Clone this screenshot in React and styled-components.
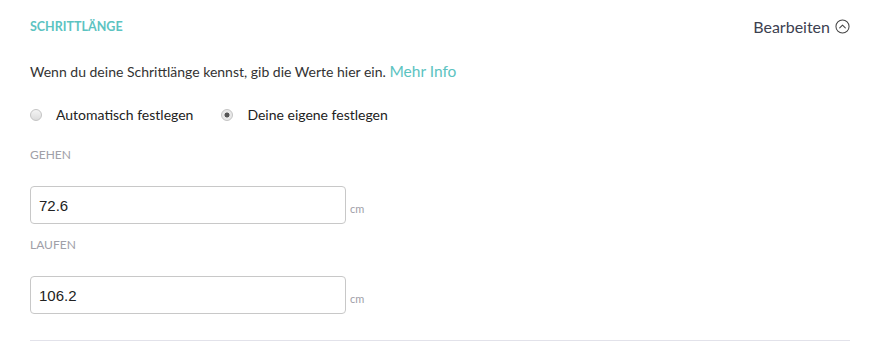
import React, { useState } from 'react';
import styled, { createGlobalStyle } from 'styled-components';

const GlobalStyle = createGlobalStyle`
  html, body { margin: 0; padding: 0; background: #fff; }
  body { font-family: Lato, "Open Sans", sans-serif; color: #333; }
`;

// --- ICONS ---
const ChevronCircle = () => (
  <svg width="15" height="15" viewBox="0 0 16 16" fill="none">
    <circle cx="8" cy="8" r="7" stroke="#444" strokeWidth="1.1" />
    <path d="M5 9.5L8 6.5L11 9.5" stroke="#444" strokeWidth="1.1" strokeLinecap="round" strokeLinejoin="round" />
  </svg>
);

// --- STYLED COMPONENTS ---
const Section = styled.section`
  width: 820px;
  padding: 0 21px 0 30px;
  display: flex;
  flex-direction: column;
`;

const Header = styled.header`
  height: 52px;
  display: flex;
  justify-content: space-between;
  align-items: center;
`;

const Title = styled.h3`
  margin: 0;
  font-size: 12.5px;
  font-weight: 700;
  color: #5cc3c1;
`;

const EditButton = styled.button`
  display: flex; align-items: center; gap: 5px;
  padding: 0; border: none; background: none;
  font-family: inherit;
  font-size: 16px;
  color: #3c4150;
  cursor: pointer;
`;

const Intro = styled.p`
  margin: 10px 0 0;
  font-size: 14px;
  color: #333;
  a {
    color: #5cc3c1;
    font-size: 15.5px;
    text-decoration: none;
  }
`;

const RadioRow = styled.div`
  display: flex;
  gap: 28px;
  margin-top: 26px;
`;

const RadioLabel = styled.label`
  display: flex; align-items: center; gap: 14px;
  font-size: 14px;
  color: #222;
  cursor: pointer;
`;

const RadioDot = styled.span`
  width: 10px; height: 10px;
  border-radius: 50%;
  border: 1px solid #c4c4c4;
  background: ${p => p.$checked
    ? 'radial-gradient(circle, #555 0 2.2px, #e8e8e8 2.8px)'
    : 'linear-gradient(#f4f4f4, #dcdcdc)'};
  flex-shrink: 0;
`;

const FieldLabel = styled.div`
  margin-top: ${p => p.$first ? '25px' : '14px'};
  font-size: 12px;
  line-height: 14px;
  color: #a0a0a8;
  text-transform: uppercase;
`;

const InputRow = styled.div`
  display: flex;
  align-items: center;
  gap: 4px;
  margin-top: 24px;
`;

const Input = styled.input`
  box-sizing: border-box;
  width: 316px; height: 38px;
  padding: 0 8px;
  border: 1px solid #c8c8c8;
  border-radius: 4px;
  font-family: "Liberation Sans", Arial, sans-serif;
  font-size: 15px;
  color: #222;
  outline: none;
`;

const Unit = styled.span`
  font-size: 11px;
  color: #a0a0a8;
  margin-top: 6px;
`;

const Divider = styled.hr`
  margin: 26px 0 0;
  border: none;
  border-top: 1px solid #e2e2ea;
`;

const App = () => {
  const [mode, setMode] = useState('own');
  const [walk, setWalk] = useState('72.6');
  const [run, setRun] = useState('106.2');

  return (
    <>
      <GlobalStyle />
      <Section>
        <Header>
          <Title>SCHRITTLÄNGE</Title>
          <EditButton>Bearbeiten <ChevronCircle /></EditButton>
        </Header>
        <Intro>
          Wenn du deine Schrittlänge kennst, gib die Werte hier ein. <a href="#">Mehr Info</a>
        </Intro>
        <RadioRow>
          <RadioLabel onClick={() => setMode('auto')}>
            <RadioDot $checked={mode === 'auto'} />
            Automatisch festlegen
          </RadioLabel>
          <RadioLabel onClick={() => setMode('own')}>
            <RadioDot $checked={mode === 'own'} />
            Deine eigene festlegen
          </RadioLabel>
        </RadioRow>
        <FieldLabel $first>Gehen</FieldLabel>
        <InputRow>
          <Input value={walk} onChange={e => setWalk(e.target.value)} />
          <Unit>cm</Unit>
        </InputRow>
        <FieldLabel>Laufen</FieldLabel>
        <InputRow>
          <Input value={run} onChange={e => setRun(e.target.value)} />
          <Unit>cm</Unit>
        </InputRow>
        <Divider />
      </Section>
    </>
  );
};

export default App;
